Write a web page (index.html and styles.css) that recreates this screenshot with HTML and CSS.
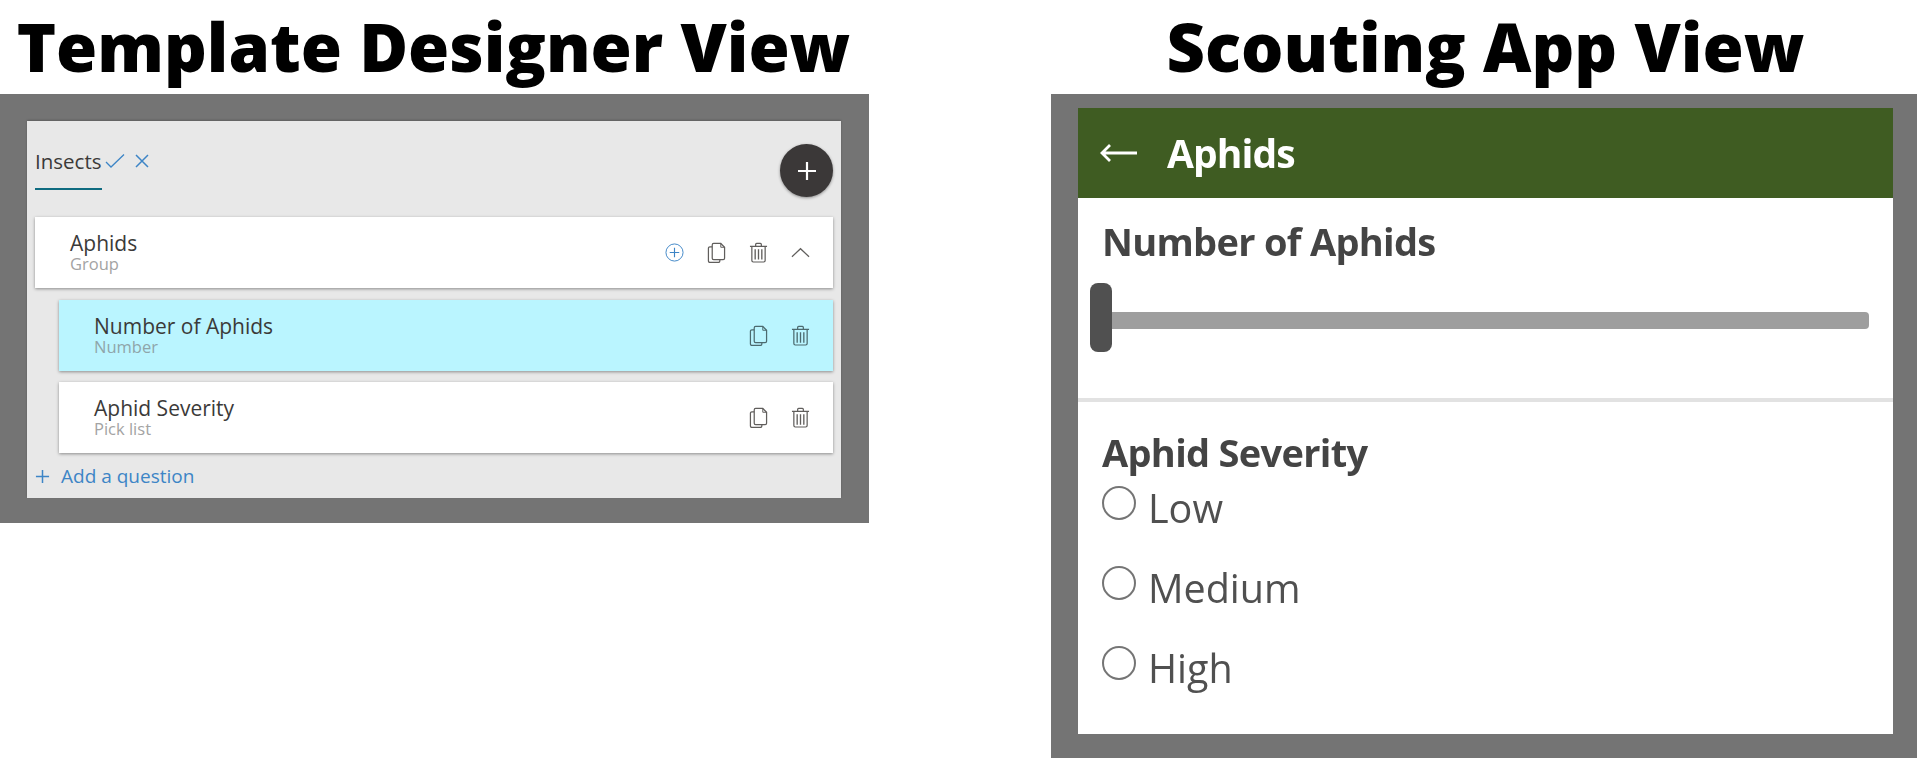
FILE: index.html
```html
<!DOCTYPE html>
<html lang="en">
<head>
    <meta charset="UTF-8">
    <title>Template Designer View / Scouting App View</title>
    <link rel="stylesheet" href="styles.css">
</head>
<body>
    <svg class="defs" width="0" height="0">
        <symbol id="copy" viewBox="0 0 20 22">
            <path d="M7 1.500h7.500l4 4v11.500a1.500 1.500 0 0 1-1.500 1.500h-10a1.500 1.500 0 0 1-1.500-1.500v-14a1.500 1.500 0 0 1 1.500-1.500z" fill="none" stroke="currentColor" stroke-width="1.300"/>
            <path d="M14.500 1.500v4h4" fill="none" stroke="currentColor" stroke-width="1"/>
            <path d="M5.500 5h-2.500a1.500 1.500 0 0 0-1.500 1.500v13.500a1.500 1.500 0 0 0 1.500 1.500h9a1.500 1.500 0 0 0 1.500-1.500v-1.500" fill="none" stroke="currentColor" stroke-width="1.300"/>
        </symbol>
        <symbol id="trash" viewBox="0 0 20 22">
            <path d="M1 4.500h18M7 4.500v-2a1 1 0 0 1 1-1h4a1 1 0 0 1 1 1v2" fill="none" stroke="currentColor" stroke-width="1.300"/>
            <path d="M3 4.500v15a1.500 1.500 0 0 0 1.500 1.500h11a1.500 1.500 0 0 0 1.500-1.500v-15" fill="none" stroke="currentColor" stroke-width="1.300"/>
            <path d="M6.500 7.500v11M10 7.500v11M13.500 7.500v11" fill="none" stroke="currentColor" stroke-width="1.400"/>
        </symbol>
    </svg>

    <section class="side side-designer">
        <h1>Template Designer View</h1>
        <div class="frame">
            <div class="panel">
                <div class="tab-row">
                    <div class="tab">
                        <span class="tab-name">Insects</span>
                        <svg class="tab-icon" viewBox="0 0 20 16"><path d="M1 9l5 5L19 1.500" fill="none" stroke="#3d85c6" stroke-width="1.300"/></svg>
                        <svg class="tab-icon tab-x" viewBox="0 0 14 14"><path d="M1 1l12 12M13 1L1 13" fill="none" stroke="#3d85c6" stroke-width="1.500"/></svg>
                    </div>
                    <button class="fab">
                        <svg viewBox="0 0 20 20" width="20" height="20"><path d="M10 1v18M1 10h18" stroke="#fff" stroke-width="2.200"/></svg>
                    </button>
                </div>

                <div class="card">
                    <div class="card-text">
                        <div class="card-title">Aphids</div>
                        <div class="card-type">Group</div>
                    </div>
                    <div class="card-icons">
                        <svg class="icon add-icon" viewBox="0 0 20 20"><circle cx="10" cy="10" r="9" fill="none" stroke="#3d85c6" stroke-width="1"/><path d="M10 5v10M5 10h10" stroke="#3d85c6" stroke-width="1.200"/></svg>
                        <svg class="icon"><use href="#copy"/></svg>
                        <svg class="icon"><use href="#trash"/></svg>
                        <svg class="icon" viewBox="0 0 20 22"><path d="M1 15.500l9-8.500 9 8.500" fill="none" stroke="currentColor" stroke-width="1.300"/></svg>
                    </div>
                </div>

                <div class="card child selected">
                    <div class="card-text">
                        <div class="card-title">Number of Aphids</div>
                        <div class="card-type">Number</div>
                    </div>
                    <div class="card-icons">
                        <svg class="icon"><use href="#copy"/></svg>
                        <svg class="icon"><use href="#trash"/></svg>
                    </div>
                </div>

                <div class="card child">
                    <div class="card-text">
                        <div class="card-title">Aphid Severity</div>
                        <div class="card-type">Pick list</div>
                    </div>
                    <div class="card-icons">
                        <svg class="icon"><use href="#copy"/></svg>
                        <svg class="icon"><use href="#trash"/></svg>
                    </div>
                </div>

                <div class="add-question">
                    <svg viewBox="0 0 16 16" width="15" height="15"><path d="M8 1v14M1 8h14" stroke="#3d85c6" stroke-width="1.600"/></svg>
                    <span>Add a question</span>
                </div>
            </div>
        </div>
    </section>

    <section class="side side-app">
        <h1>Scouting App View</h1>
        <div class="frame">
            <div class="phone">
                <div class="app-header">
                    <svg class="back" viewBox="0 0 38 20"><path d="M37 10H2M10 2l-8 8 8 8" fill="none" stroke="#fff" stroke-width="2.800"/></svg>
                    <span>Aphids</span>
                </div>
                <div class="question slider-question">
                    <div class="question-title">Number of Aphids</div>
                    <div class="slider">
                        <div class="track"></div>
                        <div class="thumb"></div>
                    </div>
                </div>
                <div class="question pick-question">
                    <div class="question-title">Aphid Severity</div>
                    <div class="option"><span class="radio"></span><span>Low</span></div>
                    <div class="option"><span class="radio"></span><span>Medium</span></div>
                    <div class="option"><span class="radio"></span><span>High</span></div>
                </div>
            </div>
        </div>
    </section>
</body>
</html>
```
FILE: styles.css
```css
* { box-sizing: border-box; }
html, body { margin: 0; padding: 0; }
body {
    font-family: 'Open Sans', 'Noto Sans', sans-serif;
    background: white;
    display: flex;
    justify-content: space-between;
    align-items: flex-start;
    height: 760px;
    overflow: hidden;
}
.defs { position: absolute; }
.side-designer { width: 869px; }
.side-app { width: 866px; }
h1 {
    margin: 0;
    height: 94px;
    font-size: 66.7px;
    line-height: 94px;
    font-weight: 800;
    color: black;
    text-align: center;
    white-space: nowrap;
}
.side-designer h1 { padding-right: 2px; }
.side-app h1 { padding-left: 3px; }
.side-designer .frame { background: #747474; padding: 27px 28px 25px 27px; height: 429px; }
.side-app .frame { background: #747474; padding: 14px 24px 24px 27px; height: 664px; }

/* designer */
.panel {
    background: #e8e8e8;
    height: 377px;
    padding: 0 8px;
    box-shadow: 0 -1px 2px rgba(0,0,0,0.2);
}
.tab-row {
    display: flex;
    justify-content: space-between;
    height: 96px;
    padding-top: 23px;
}
.tab {
    height: 46px;
    width: 67px;
    border-bottom: 2px solid #0f6b80;
    display: flex;
    align-items: flex-start;
    padding-top: 9px;
    white-space: nowrap;
}
.tab-name { font-size: 20.5px; line-height: 28px; color: #3b3a39; margin-top: -6px; }
.tab-icon { width: 20px; height: 16px; margin-left: 4px; flex: none; }
.tab-x { width: 14px; height: 14px; margin-left: 10px; margin-top: 1px; }
.fab {
    width: 53px;
    height: 53px;
    border: none;
    padding: 0;
    border-radius: 50%;
    background: #3b3838;
    display: flex;
    align-items: center;
    justify-content: center;
    box-shadow: 0 1px 3px rgba(0,0,0,0.4);
}
.card {
    background: white;
    height: 71px;
    margin-bottom: 12px;
    padding-left: 35px;
    padding-right: 23px;
    display: flex;
    justify-content: space-between;
    align-items: center;
    box-shadow: 0 1px 3px rgba(0,0,0,0.4);
}
.card.child { margin-left: 24px; margin-bottom: 11px; }
.card.selected { background: #baf5ff; }
.card-title { font-size: 21px; line-height: 22px; font-weight: 500; color: #3b3a39; }
.card-type { font-size: 16.5px; line-height: 19px; color: #a3a3a3; }
.selected .card-type { color: #8fa5aa; }
.card-icons { display: flex; gap: 23px; align-items: center; color: #605e5c; }
.selected .card-icons { color: #4c6a6f; }
.icon { width: 19px; height: 21px; display: block; }
.add-icon { color: #3d85c6; }
.add-question {
    display: flex;
    align-items: center;
    gap: 11px;
    color: #3d85c6;
    font-size: 19px;
    line-height: 26px;
    margin-top: -1px;
}

/* scouting app */
.phone { background: white; height: 626px; }
.app-header {
    background: #3f5c22;
    height: 90px;
    display: flex;
    align-items: center;
    color: white;
    font-size: 39px;
    font-weight: 700;
    letter-spacing: -0.9px;
    padding-left: 22px;
}
.app-header span { filter: blur(0.6px); margin-top: -2px; }
.back { width: 38px; height: 20px; margin-right: 29px; }
.question-title {
    font-size: 38px;
    line-height: 52px;
    font-weight: 700;
    letter-spacing: -0.7px;
    color: #444;
    filter: blur(0.6px);
}
.slider-question {
    height: 204px;
    padding: 17px 24px 0 24px;
    border-bottom: 4px solid #e2e2e2;
}
.slider {
    position: relative;
    height: 70px;
    margin-left: -12px;
    margin-top: 16px;
}
.track {
    position: absolute;
    left: 12px;
    right: 0;
    top: 29px;
    height: 17px;
    border-radius: 4px;
    background: #9e9e9e;
}
.thumb {
    position: absolute;
    left: 0;
    top: 0;
    width: 22px;
    height: 69px;
    border-radius: 8px;
    background: #505050;
}
.pick-question { padding: 24px 24px 0 24px; }
.pick-question .question-title { margin-bottom: 3px; }
.option {
    display: flex;
    align-items: flex-start;
    gap: 12px;
    height: 80px;
    font-size: 39.5px;
    line-height: 54px;
    color: #505050;
}
.option span:last-child { filter: blur(0.5px); }
.radio {
    width: 34px;
    height: 34px;
    border: 2px solid #757575;
    border-radius: 50%;
    flex: none;
    margin-top: 5px;
}
```
